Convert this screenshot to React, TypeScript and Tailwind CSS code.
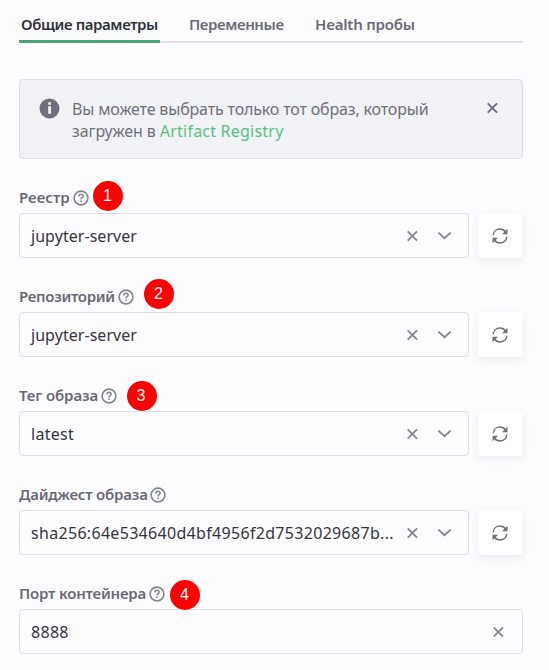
import React from "react";

function Cross({ className }: { className: string }) {
  return (
    <svg width="12" height="12" viewBox="0 0 12 12" fill="none" stroke="currentColor" strokeWidth="1.8" className={`shrink-0 ${className}`}>
      <path d="M1.7 1.3 11 10.6M11 1.3 1.7 10.6" />
    </svg>
  );
}

function Chevron() {
  return (
    <svg width="14" height="8" viewBox="0 0 14 8" fill="none" stroke="currentColor" strokeWidth="1.8" className="shrink-0 text-[#85858f]">
      <path d="M1.4.6 7.5 6.2 13.6.6" />
    </svg>
  );
}

function Help() {
  return (
    <svg width="16" height="16" viewBox="0 0 16 16" fill="none" stroke="currentColor" strokeWidth="1.6" className="shrink-0 text-[#85858f]">
      <circle cx="8" cy="8" r="6.9" />
      <path d="M5.9 6.5C5.9 5.1 6.8 4.3 8 4.3s2.1.8 2.1 1.9c0 1.5-2.1 1.6-2.1 3.3" />
      <path d="M8 10.5V12" />
    </svg>
  );
}

function Refresh() {
  return (
    <svg width="16" height="16" viewBox="0 0 16 16" fill="none" stroke="currentColor" strokeWidth="1.5" className="-ml-px text-[#70707a]">
      <path d="M1.2 7.2C1.5 3.5 4.4 1.1 8 1.1c2.3 0 4.3 1 5.5 2.9M14.8 8.8c-.3 3.7-3.2 6.1-6.8 6.1-2.3 0-4.3-1-5.5-2.9" />
      <path d="M15.5.8v5.5H10zM.5 15.2V9.7H6z" fill="currentColor" stroke="none" />
    </svg>
  );
}

type FieldProps = {
  label: string;
  value: string;
  labelClass: string;
  valueClass: string;
  badge?: string;
  badgeClass?: string;
  select?: boolean;
};

function Field({ label, value, labelClass, valueClass, badge, badgeClass = "", select = true }: FieldProps) {
  return (
    <div className="h-[99px]">
      <div className="relative flex h-[29px] items-center pb-[2px]">
        <span className={`shrink-0 whitespace-nowrap pb-px text-[15px] font-semibold leading-[22px] text-[#696973] ${labelClass}`}>{label}</span>
        <Help />
        {badge && (
          <span className={`absolute flex size-[30px] items-center justify-center rounded-full bg-[#ff0000] pr-px font-['Liberation_Sans',sans-serif] text-base leading-none text-white ${badgeClass}`}>
            {badge}
          </span>
        )}
      </div>
      <div className="flex gap-[9px]">
        <div className={`flex h-[45px] min-w-0 flex-1 items-center rounded-[4px] border border-[#dfdfe9] pl-[11px] ${select ? "pr-[17px]" : "pr-[18px]"}`}>
          <span className={`min-w-0 flex-1 whitespace-nowrap text-base leading-6 text-[#34343c] ${valueClass}`}>{value}</span>
          <Cross className="text-[#85858f]" />
          {select && <span className="ml-[19px]"><Chevron /></span>}
        </div>
        {select && (
          <button className="flex size-[45px] shrink-0 items-center justify-center rounded-[4px] bg-white shadow-[0_3px_8px_rgba(40,40,65,0.08)]">
            <Refresh />
          </button>
        )}
      </div>
    </div>
  );
}

export default function App() {
  return (
    <main className="h-[670px] w-[549px] overflow-hidden bg-[#fdfdff] pl-[19px] pr-[26px] font-['Noto_Sans',sans-serif]">
      <nav className="flex h-[43px] border-b-2 border-[#dfdfe9] text-[15px] font-semibold leading-[22px] text-[#6b6b75]">
        <div className="-mb-[2px] h-[43px] w-[141px] shrink-0 rounded-b-[1px] border-b-[3px] border-[#4ba276] pl-[2px] pt-[13px] text-[#303038]">
          <span className="whitespace-nowrap tracking-[-0.4px]">Общие параметры</span>
        </div>
        <span className="ml-[29px] w-[97px] shrink-0 whitespace-nowrap pt-[13px] tracking-[-0.4px]">Переменные</span>
        <span className="ml-[29px] whitespace-nowrap pt-[13px] tracking-[-0.2px]">Health пробы</span>
      </nav>
      <section className="mt-9 flex h-20 items-start rounded-[4px] border border-[#dfdfe9] bg-[#f1f2f6] pl-[19px] pr-[24px] pt-[18px]">
        <svg width="22" height="22" viewBox="0 0 22 22" className="shrink-0">
          <circle cx="10.5" cy="10.5" r="10" fill="#70707c" />
          <path d="M9.2 4.2h2.8v2.6H9.2zm0 4H12v7.6H9.2z" fill="#f1f2f6" />
        </svg>
        <p className="ml-[11px] flex-1 whitespace-nowrap text-base leading-[22px] text-[#70707a]">
          <span className="block tracking-[-0.16px]">Вы можете выбрать только тот образ, который</span>
          <span className="block tracking-[-0.1px]">загружен в <a className="tracking-[0.22px] text-[#59c283]">Artifact Registry</a></span>
        </p>
        <Cross className="mt-[4px] text-[#686874]" />
      </section>
      <div className="mt-[25px]">
        <Field label="Реестр" value="jupyter-server" labelClass="w-[54px]" valueClass="tracking-[0.05px]" badge="1" badgeClass="left-[74px] top-[-3.5px]" />
        <Field label="Репозиторий" value="jupyter-server" labelClass="w-[99px] tracking-[-0.3px]" valueClass="tracking-[0.05px]" badge="2" badgeClass="left-[125px] top-[-4.5px]" />
        <Field label="Тег образа" value="latest" labelClass="w-[82px] tracking-[-0.1px]" valueClass="tracking-[0.3px]" badge="3" badgeClass="left-[107.5px] top-[-1.5px]" />
        <Field label="Дайджест образа" value="sha256:64e534640d4bf4956f2d7532029687b..." labelClass="w-[131px] tracking-[-0.2px]" valueClass="tracking-[0.31px]" />
        <Field label="Порт контейнера" value="8888" labelClass="w-[130px] tracking-[-0.2px]" valueClass="tracking-[0.3px]" badge="4" badgeClass="left-[151px] top-[-0.5px]" select={false} />
      </div>
    </main>
  );
}
